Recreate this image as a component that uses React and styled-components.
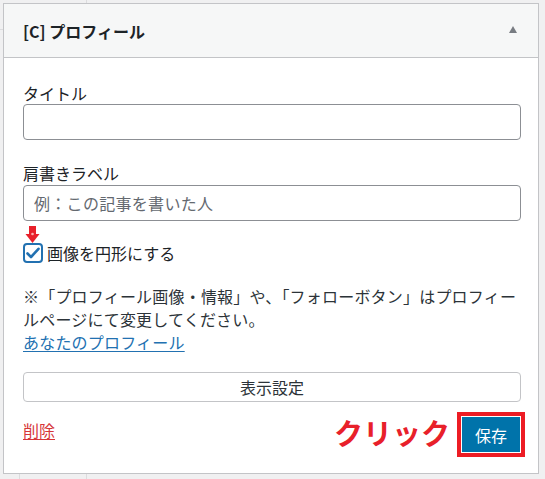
import React from "react";
import styled, { createGlobalStyle } from "styled-components";

const Global = createGlobalStyle`
  html, body { margin: 0; padding: 0; }
  body {
    background: #f0f0f1;
    font-family: "Noto Sans CJK JP", "Noto Sans", sans-serif;
    color: #1d2327;
    width: 545px;
    height: 479px;
    overflow: hidden;
  }
`;

const Page = styled.div`
  position: relative;
  width: 545px;
  height: 479px;
  padding: 3px 0 0 3px;
  box-sizing: border-box;
`;

const BackBox = styled.div`
  position: absolute;
  box-sizing: border-box;
  border: 1px solid #dcdcde;
  background: #f0f0f1;
  z-index: 0;
`;

const Panel = styled.section`
  position: relative;
  z-index: 1;
  width: 536px;
  height: 471px;
  box-sizing: border-box;
  border: 1px solid #c3c4c7;
  background: #fff;
  display: flex;
  flex-direction: column;
`;

const Header = styled.header`
  height: 54px;
  flex: none;
  box-sizing: border-box;
  background: #f6f7f7;
  border-bottom: 1px solid #c3c4c7;
  display: flex;
  align-items: center;
  justify-content: space-between;
  padding: 0 21px 0 19px;
`;

const Title = styled.h3`
  margin: 0;
  font-size: 16px;
  font-weight: 700;
  line-height: 20px;
  color: #1d2327;
`;

const Toggle = styled.span`
  width: 0;
  height: 0;
  border-left: 4.5px solid transparent;
  border-right: 4.5px solid transparent;
  border-bottom: 7px solid #787c82;
  margin-top: -2px;
`;

const Body = styled.div`
  flex: 1;
  display: flex;
  flex-direction: column;
  padding: 24px 17px 0 19px;
`;

const Label = styled.label`
  display: block;
  font-size: 16px;
  line-height: 22px;
  color: #1d2327;
  margin-top: ${(p) => p.$mt || 0}px;
`;

const TextInput = styled.input`
  display: block;
  width: 100%;
  height: 36px;
  box-sizing: border-box;
  margin: ${(p) => p.$mt || 0}px 0 0;
  border: 1px solid #8c8f94;
  border-radius: 4px;
  background: #fff;
  padding: 0 10px;
  font-family: inherit;
  font-size: 16px;
  letter-spacing: 0.3px;
  color: #2c3338;
  &::placeholder { color: #646970; }
`;

const CheckRow = styled.div`
  position: relative;
  display: flex;
  align-items: center;
  gap: 4px;
  margin-top: 22px;
  height: 20px;
`;

const CheckBox = styled.span`
  width: 20px;
  height: 20px;
  box-sizing: border-box;
  border: 2px solid #2271b1;
  border-radius: 4px;
  display: flex;
  align-items: center;
  justify-content: center;
  background: #fff;
`;

const CheckLabel = styled.span`
  font-size: 16px;
  line-height: 20px;
  color: #1d2327;
`;

const Arrow = styled.svg`
  position: absolute;
  left: 1px;
  top: -17px;
`;

const Note = styled.p`
  margin: 22px 0 0;
  font-size: 16px;
  line-height: 23px;
  letter-spacing: 0.2px;
  color: #2c3338;
`;

const Link = styled.a`
  display: block;
  font-size: 16px;
  line-height: 23px;
  letter-spacing: 0.2px;
  color: #2271b1;
  text-decoration: underline;
  text-underline-offset: 2px;
`;

const WideButton = styled.button`
  display: block;
  width: 100%;
  height: 30px;
  margin-top: 18px;
  box-sizing: border-box;
  border: 1px solid #c3c4c7;
  border-radius: 4px;
  background: #fff;
  font-family: inherit;
  font-size: 16px;
  color: #2c3338;
  padding: 0;
`;

const Footer = styled.div`
  display: flex;
  justify-content: space-between;
  align-items: flex-start;
  margin-top: 15px;
  padding-right: 1px;
`;

const Delete = styled.a`
  font-size: 16px;
  line-height: 22px;
  margin-top: 2px;
  color: #d63638;
  text-decoration: underline;
  text-underline-offset: 2px;
`;

const Actions = styled.div`
  display: flex;
  align-items: center;
`;

const Callout = styled.span`
  font-size: 29px;
  font-weight: 700;
  line-height: 35px;
  color: #e8202a;
  letter-spacing: 0px;
  margin-right: 12px;
  margin-top: -5px;
`;

const SaveButton = styled.button`
  width: 58px;
  height: 35px;
  border: none;
  background: #0073aa;
  color: #fff;
  font-family: inherit;
  font-size: 16px;
  padding: 0;
  outline: 4px solid #ed1c24;
  outline-offset: 1px;
`;

export default function App() {
  return (
    <>
      <Global />
      <Page>
        <BackBox style={{ left: -1, top: -1, width: 88, height: 31 }} />
        <BackBox style={{ left: 19, top: 472, width: 68, height: 20 }} />
        <Panel>
          <Header>
            <Title>[C] プロフィール</Title>
            <Toggle />
          </Header>
          <Body>
            <Label>タイトル</Label>
            <TextInput type="text" />
            <Label $mt={22}>肩書きラベル</Label>
            <TextInput $mt={1} type="text" placeholder="例：この記事を書いた人" />
            <CheckRow>
              <Arrow width="18" height="18" viewBox="0 0 18 18">
                <rect x="5" y="0" width="7" height="9" fill="#e8202a" />
                <polygon points="1.5,8 15.5,8 8.5,17" fill="#e8202a" />
                <circle cx="8.5" cy="8" r="1.3" fill="#f8b0b0" />
              </Arrow>
              <CheckBox>
                <svg width="14" height="12" viewBox="0 0 14 12">
                  <path d="M1.5 6.5 L5 10 L12.5 1.8" fill="none" stroke="#2271b1" strokeWidth="2.6" strokeLinecap="round" strokeLinejoin="round" />
                </svg>
              </CheckBox>
              <CheckLabel>画像を円形にする</CheckLabel>
            </CheckRow>
            <Note>※「プロフィール画像・情報」や、「フォローボタン」はプロフィールページにて変更してください。</Note>
            <Link href="#">あなたのプロフィール</Link>
            <WideButton>表示設定</WideButton>
            <Footer>
              <Delete href="#">削除</Delete>
              <Actions>
                <Callout>クリック</Callout>
                <SaveButton>保存</SaveButton>
              </Actions>
            </Footer>
          </Body>
        </Panel>
      </Page>
    </>
  );
}
